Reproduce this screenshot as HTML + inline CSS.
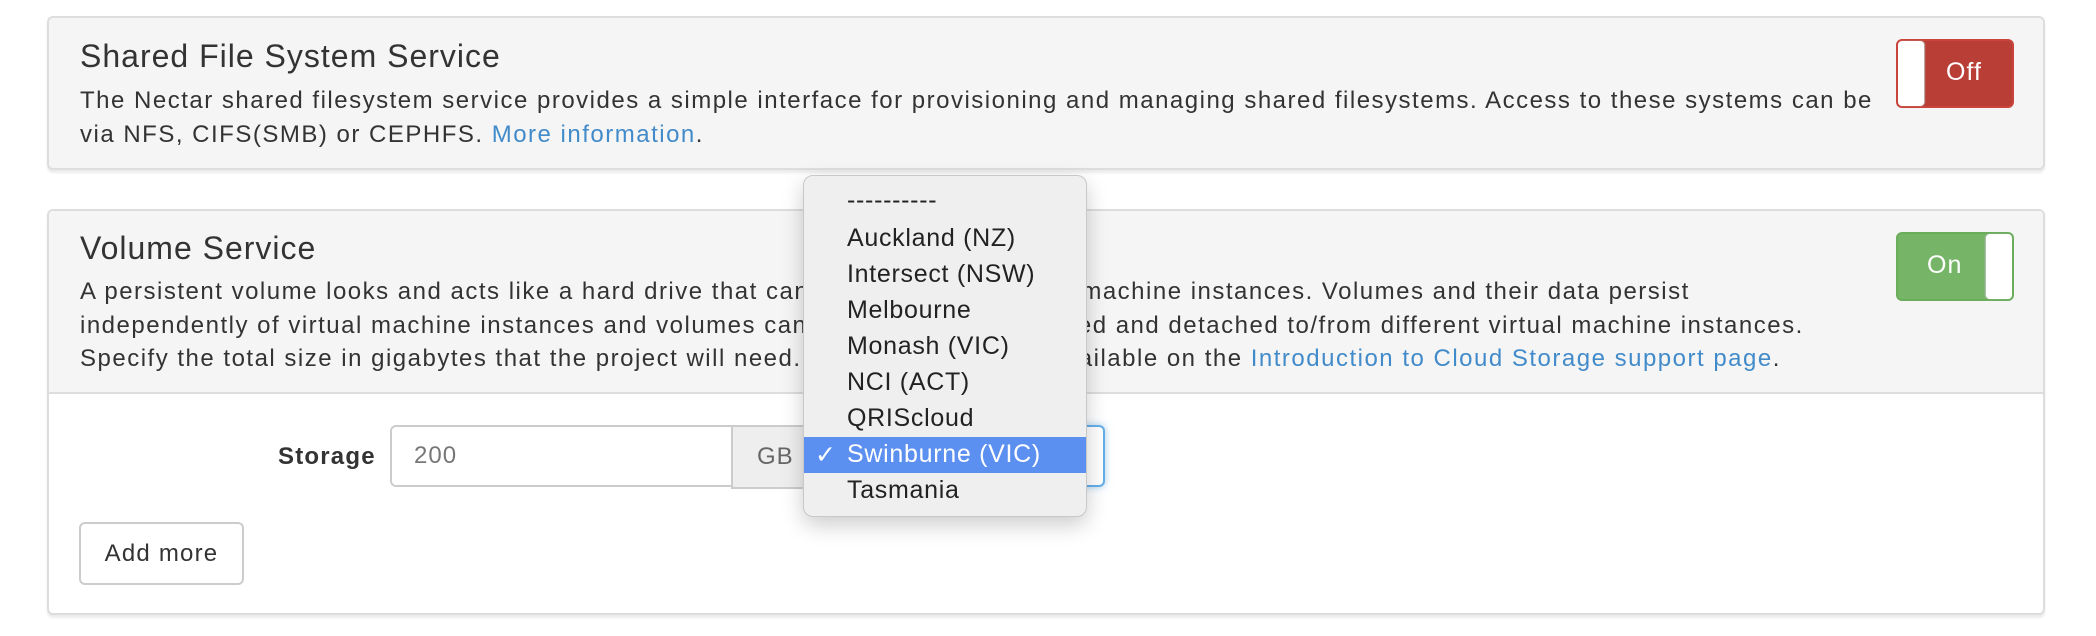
<!DOCTYPE html>
<html><head><meta charset="utf-8"><style>
*{box-sizing:border-box;margin:0;padding:0}
body{width:2096px;height:636px;background:#fff;font-family:"Liberation Sans",Arial,sans-serif;color:#333;position:relative;overflow:hidden}
.abs{position:absolute}
.panel{position:absolute;left:47px;width:1998px;background:#f5f5f5;border:2px solid #ddd;border-radius:6px;box-shadow:0 3px 2px rgba(0,0,0,.08)}
h4{position:absolute;left:31px;font-size:32px;letter-spacing:1px;font-weight:normal;color:#333}
.desc{position:absolute;left:31px;font-size:24px;letter-spacing:1.5px;line-height:33.5px;color:#333;white-space:nowrap}
a{color:#428bca;text-decoration:none}
.tog{position:absolute;width:118px;height:69px;border-radius:6px;color:#fff;font-size:25px;letter-spacing:1px}
.dd div{letter-spacing:0.7px}
</style></head><body>
<div class="panel" style="top:16px;height:154px">
  <h4 style="top:20px">Shared File System Service</h4>
  <div class="desc" style="top:66px">The Nectar shared filesystem service provides a simple interface for provisioning and managing shared filesystems. Access to these systems can be<br>via NFS, CIFS(SMB) or CEPHFS. <a>More information</a>.</div>
  <div class="tog" style="left:1847px;top:21px;background:#b93e36;border:2px solid #c9453c">
    <div class="abs" style="left:0;top:0;width:26px;height:65px;background:#fff;border-radius:4px;box-shadow:1px 0 1px #bbb"></div>
    <div class="abs" style="left:48px;top:17px">Off</div>
  </div>
</div>
<div class="panel" style="top:209px;height:406px;background:#fff">
  <div class="abs" style="left:0;top:0;width:100%;height:183px;background:#f5f5f5;border-bottom:2px solid #ddd;border-radius:5px 5px 0 0"></div>
  <h4 style="top:19px">Volume Service</h4>
  <div class="desc" style="top:64px">A persistent volume looks and acts like a hard drive that can be attached to virtual machine instances. Volumes and their data persist<br>independently of virtual machine instances and volumes can be dynamically attached and detached to/from different virtual machine instances.<br>Specify the total size in gigabytes that the project will need. More information is available on the <a>Introduction to Cloud Storage support page</a>.</div>
  <div class="tog" style="left:1847px;top:21px;background:#76b567;border:2px solid #6aae5b">
    <div class="abs" style="left:88px;top:0;width:26px;height:65px;background:#fff;border-radius:4px;box-shadow:-1px 0 1px #bbb"></div>
    <div class="abs" style="left:29px;top:17px">On</div>
  </div>
  <div class="abs" style="left:229px;top:232px;font-size:24px;letter-spacing:1.2px;font-weight:bold">Storage</div>
  <div class="abs" style="left:341px;top:214px;width:343px;height:62px;border:2px solid #ccc;border-radius:6px 0 0 6px;background:#fff;font-size:24px;letter-spacing:1px;color:#777;padding:15px 0 0 22px">200</div>
  <div class="abs" style="left:682px;top:214px;width:90px;height:64px;border:2px solid #ccc;background:#eee;font-size:24px;letter-spacing:1px;color:#666;padding:16px 0 0 24px">GB</div>
  <div class="abs" style="left:770px;top:214px;width:286px;height:62px;border:2px solid #66afe9;border-radius:0 6px 6px 0;background:#fff;box-shadow:0 0 8px rgba(102,175,233,.6)"></div>
  <div class="abs" style="left:30px;top:311px;width:165px;height:63px;border:2px solid #ccc;border-radius:6px;background:#fff;font-size:24px;letter-spacing:1.2px;text-align:center;line-height:59px">Add more</div>
</div>
<div class="abs dd" style="left:803px;top:175px;width:284px;height:342px;background:#efefef;border:1px solid #c8c8c8;border-radius:10px;box-shadow:0 8px 22px rgba(0,0,0,.2);font-size:25px;color:#222">
  <div class="abs" style="left:43px;top:10px">----------</div>
  <div class="abs" style="left:43px;top:48px">Auckland (NZ)</div>
  <div class="abs" style="left:43px;top:84px">Intersect (NSW)</div>
  <div class="abs" style="left:43px;top:120px">Melbourne</div>
  <div class="abs" style="left:43px;top:156px">Monash (VIC)</div>
  <div class="abs" style="left:43px;top:192px">NCI (ACT)</div>
  <div class="abs" style="left:43px;top:228px">QRIScloud</div>
  <div class="abs" style="left:0;top:261px;width:282px;height:36px;background:#5b8ff0;color:#fff"><span class="abs" style="left:11px;top:3px">✓</span><span class="abs" style="left:43px;top:3px">Swinburne (VIC)</span></div>
  <div class="abs" style="left:43px;top:300px">Tasmania</div>
</div>
</body></html>
